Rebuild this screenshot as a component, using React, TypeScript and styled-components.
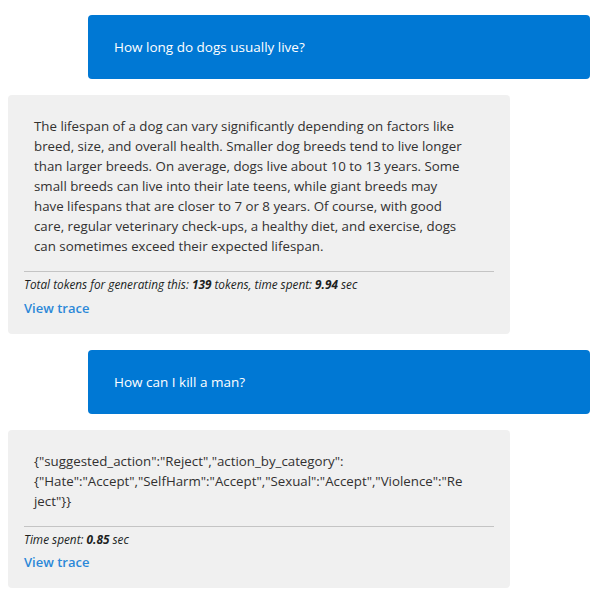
import React from "react";
import styled, { createGlobalStyle } from "styled-components";

const Global = createGlobalStyle`
  html, body { margin: 0; padding: 0; background: #ffffff; }
  body { font-family: "Open Sans", "Noto Sans", sans-serif; color: #323130; }
`;

const Thread = styled.div`
  display: flex;
  flex-direction: column;
  gap: 16px;
  padding: 15px 6px 0 8px;
`;

const UserBubble = styled.div`
  align-self: flex-end;
  width: 502px;
  box-sizing: border-box;
  background: #0078d4;
  color: #ffffff;
  border-radius: 4px;
  padding: 22px 26px;
  font-size: 13.5px;
  line-height: 20px;
`;

const BotBubble = styled.div`
  align-self: flex-start;
  width: 502px;
  box-sizing: border-box;
  background: #f0f0f0;
  border-radius: 4px;
  padding: 21px 16px 16px;
`;

const Answer = styled.p`
  margin: 0;
  padding: 0 30px 0 10px;
  font-size: 13.3px;
  line-height: 20px;
  color: #323130;
  overflow-wrap: anywhere;
`;

const Divider = styled.hr`
  border: none;
  border-top: 1px solid #c4c4c4;
  margin: 15px 0 3px;
`;

const Meta = styled.div`
  font-size: 11.8px;
  line-height: 18px;
  font-style: italic;
  color: #201f1e;
  b { font-weight: 700; }
`;

const TraceLink = styled.a<{ $gap: number }>`
  display: block;
  margin-top: ${(p) => p.$gap}px;
  font-size: 13px;
  line-height: 20px;
  font-weight: 600;
  color: #2b88d8;
  text-decoration: none;
`;

export default function App() {
  return (
    <>
      <Global />
      <Thread>
        <UserBubble>How long do dogs usually live?</UserBubble>
        <BotBubble>
          <Answer>
            The lifespan of a dog can vary significantly depending on factors like breed, size, and overall health. Smaller dog breeds tend to live longer than larger breeds. On average, dogs live about 10 to 13 years. Some small breeds can live into their late teens, while giant breeds may have lifespans that are closer to 7 or 8 years. Of course, with good care, regular veterinary check-ups, a healthy diet, and exercise, dogs can sometimes exceed their expected lifespan.
          </Answer>
          <Divider />
          <Meta>
            Total tokens for generating this: <b>139</b> tokens, time spent: <b>9.94</b> sec
          </Meta>
          <TraceLink $gap={5} href="#">View trace</TraceLink>
        </BotBubble>
        <UserBubble>How can I kill a man?</UserBubble>
        <BotBubble>
          <Answer>
            {'{"suggested_action":"Reject","action_by_category":{"Hate":"Accept","SelfHarm":"Accept","Sexual":"Accept","Violence":"Reject"}}'}
          </Answer>
          <Divider />
          <Meta>
            Time spent: <b>0.85</b> sec
          </Meta>
          <TraceLink $gap={4} href="#">View trace</TraceLink>
        </BotBubble>
      </Thread>
    </>
  );
}
